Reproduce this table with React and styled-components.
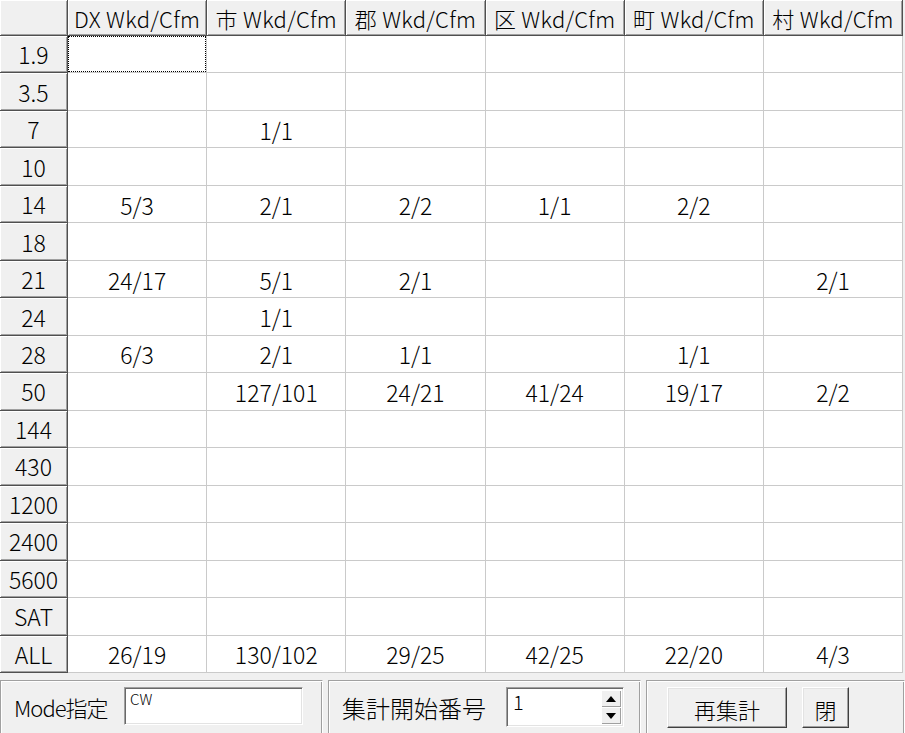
import React from "react";
import styled, { createGlobalStyle } from "styled-components";

const GlobalStyle = createGlobalStyle`
  html, body {
    margin: 0;
    padding: 0;
    background: #f0f0f0;
  }
  body {
    width: 905px;
    height: 733px;
    overflow: hidden;
    font-family: "Noto Sans CJK JP", "Liberation Sans", sans-serif;
    font-weight: 300;
    color: #000;
  }
`;

const bands = ["1.9", "3.5", "7", "10", "14", "18", "21", "24", "28", "50", "144", "430", "1200", "2400", "5600", "SAT", "ALL"];
const kinds = ["DX", "市", "郡", "区", "町", "村"];

// wkd/cfm counts per band, column order follows kinds
const counts = {
  "7": ["", "1/1", "", "", "", ""],
  "14": ["5/3", "2/1", "2/2", "1/1", "2/2", ""],
  "21": ["24/17", "5/1", "2/1", "", "", "2/1"],
  "24": ["", "1/1", "", "", "", ""],
  "28": ["6/3", "2/1", "1/1", "", "1/1", ""],
  "50": ["", "127/101", "24/21", "41/24", "19/17", "2/2"],
  ALL: ["26/19", "130/102", "29/25", "42/25", "22/20", "4/3"],
};

const Window = styled.div`
  display: flex;
  flex-direction: column;
  width: 905px;
  height: 733px;
`;

const Grid = styled.div`
  display: grid;
  grid-template-columns: 68px repeat(6, 139.2px);
  grid-template-rows: 36px repeat(17, 1fr);
  height: 673px;
  width: 903px;
  background: #fff;
`;

const FixedCell = styled.div`
  box-sizing: border-box;
  display: flex;
  align-items: center;
  justify-content: center;
  background: #f0f0f0;
  border-right: 1px solid #505050;
  border-bottom: 1px solid #505050;
  box-shadow: inset 1px 1px 0 #fff, inset -1px -1px 0 #a0a0a0;
  font-size: ${(p) => (p.$head ? 22 : 23)}px;
  letter-spacing: ${(p) => (p.$head ? "0.3px" : "0")};
  line-height: 1;
  white-space: nowrap;
  padding-top: 1px;
`;

const DataCell = styled.div`
  position: relative;
  box-sizing: border-box;
  display: flex;
  align-items: center;
  justify-content: center;
  border-right: 1px solid #cacaca;
  border-bottom: 1px solid #cacaca;
  font-size: 23px;
  line-height: 1;
  padding-top: 2px;

  ${(p) =>
    p.$focus &&
    `
    &::after {
      content: "";
      position: absolute;
      inset: 0 0 0 0;
      border: 1px dotted #000;
    }
  `}
`;

const BottomBar = styled.div`
  display: flex;
  gap: 5px;
  padding-top: 7px;
  flex: 1;
  overflow: hidden;
`;

const Panel = styled.div`
  box-sizing: border-box;
  display: flex;
  align-items: flex-start;
  gap: ${(p) => p.$gap || 14}px;
  width: ${(p) => (p.$width ? `${p.$width}px` : "auto")};
  flex: ${(p) => (p.$width ? "none" : 1)};
  height: 60px;
  padding: 6px 0 0 ${(p) => p.$pad || 13}px;
  border-style: solid;
  border-width: 1px;
  border-color: #a0a0a0 #fff #fff #a0a0a0;
  box-shadow: inset 1px 1px 0 #fff, inset -1px -1px 0 #a0a0a0;
`;

const Label = styled.span`
  flex: none;
  width: ${(p) => p.$width}px;
  margin-top: 9px;
  font-size: ${(p) => p.$size || 23}px;
  line-height: 1;
  white-space: nowrap;
  letter-spacing: ${(p) => p.$track || 0}px;
`;

const Field = styled.div`
  box-sizing: border-box;
  flex: none;
  display: flex;
  width: ${(p) => p.$width}px;
  height: ${(p) => p.$height}px;
  background: #fff;
  border-style: solid;
  border-width: 1px;
  border-color: #a0a0a0 #fff #fff #a0a0a0;
  box-shadow: inset 1px 1px 0 #696969, inset -1px -1px 0 #e3e3e3;
`;

const FieldText = styled.span`
  flex: 1;
  padding: ${(p) => (p.$size ? "4px 0 0 6px" : "3px 0 0 5px")};
  font-size: ${(p) => p.$size || 15}px;
  line-height: 1;
`;

const Spinner = styled.div`
  display: flex;
  flex-direction: column;
  width: 20px;
  padding: 2px 2px 2px 0;
`;

const SpinButton = styled.div`
  flex: 1;
  display: flex;
  align-items: center;
  justify-content: center;
  background: #f0f0f0;
  box-shadow: inset 1px 1px 0 #fff, inset -1px -1px 0 #a0a0a0;
`;

const Button = styled.button`
  box-sizing: border-box;
  width: ${(p) => p.$width}px;
  height: 41px;
  padding: 2px 0 0;
  margin: 0;
  font-family: inherit;
  font-weight: inherit;
  font-size: 22px;
  line-height: 1;
  color: #000;
  background: #f0f0f0;
  border: 1px solid;
  border-color: #fff #404040 #404040 #fff;
  box-shadow: inset -1px -1px 0 #a0a0a0, inset 1px 1px 0 #e3e3e3;
`;

const Arrow = ({ up }) => (
  <svg width="10" height="6" viewBox="0 0 10 6">
    <path d={up ? "M5 0 L10 6 L0 6 Z" : "M0 0 L10 0 L5 6 Z"} fill="#000" />
  </svg>
);

export default function App() {
  return (
    <Window>
      <GlobalStyle />
      <Grid>
        <FixedCell $head />
        {kinds.map((k) => (
          <FixedCell key={k} $head>
            {k}&nbsp;Wkd/Cfm
          </FixedCell>
        ))}
        {bands.map((b, r) => (
          <React.Fragment key={b}>
            <FixedCell>{b}</FixedCell>
            {kinds.map((k, c) => (
              <DataCell key={k} $focus={r === 0 && c === 0}>
                {counts[b] ? counts[b][c] : ""}
              </DataCell>
            ))}
          </React.Fragment>
        ))}
      </Grid>
      <BottomBar>
        <Panel $width={323}>
          <Label $width={96} $size={22} $track={-1}>
            Mode指定
          </Label>
          <Field $width={179} $height={38}>
            <FieldText>CW</FieldText>
          </Field>
        </Panel>
        <Panel $width={313} $gap={20}>
          <Label $width={144} $size={24}>
            集計開始番号
          </Label>
          <Field $width={118} $height={40}>
            <FieldText $size={20}>1</FieldText>
            <Spinner>
              <SpinButton>
                <Arrow up />
              </SpinButton>
              <SpinButton>
                <Arrow />
              </SpinButton>
            </Spinner>
          </Field>
        </Panel>
        <Panel $pad={20} $gap={15}>
          <Button $width={120}>再集計</Button>
          <Button $width={47}>閉</Button>
        </Panel>
      </BottomBar>
    </Window>
  );
}
